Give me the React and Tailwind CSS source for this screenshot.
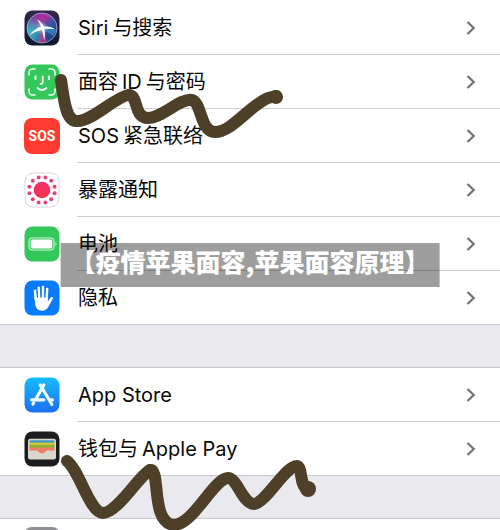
import React from 'react';

const SiriIcon = () => (
  <svg viewBox="0 0 36 36" className="size-9 shrink-0" aria-hidden="true">
    <defs>
      <linearGradient id="siriBg" x1="0" y1="0" x2="0" y2="1">
        <stop offset="0" stopColor="#33264f" />
        <stop offset="1" stopColor="#0d1830" />
      </linearGradient>
      <linearGradient id="siriTop" x1="0" y1="0" x2="1" y2="1">
        <stop offset="0" stopColor="#5a3a9c" />
        <stop offset=".35" stopColor="#b0309a" />
        <stop offset=".6" stopColor="#2f55a0" />
        <stop offset="1" stopColor="#16306f" />
      </linearGradient>
      <radialGradient id="siriTeal" cx=".1" cy=".62" r=".55">
        <stop offset="0" stopColor="#27c3c6" />
        <stop offset="1" stopColor="#27c3c6" stopOpacity="0" />
      </radialGradient>
      <radialGradient id="siriGlow">
        <stop offset="0" stopColor="#fff" />
        <stop offset=".4" stopColor="#bfe9f6" stopOpacity=".6" />
        <stop offset="1" stopColor="#bfe9f6" stopOpacity="0" />
      </radialGradient>
    </defs>
    <rect x=".5" y=".5" width="35" height="35" rx="8" fill="url(#siriBg)" />
    <circle cx="18" cy="18" r="15" fill="url(#siriTop)" />
    <circle cx="18" cy="18" r="15" fill="url(#siriTeal)" />
    <path d="M18 18 14 32Q19 34 23 31Z" fill="#d0388f" opacity=".7" />
    <path d="M18 18Q27 17 32 21L29 26Z" fill="#3d9bd0" opacity=".6" />
    <circle cx="18" cy="18" r="15" fill="none" stroke="#b8bfdd" strokeWidth=".9" opacity=".8" />
    <circle cx="18" cy="18" r="7" fill="url(#siriGlow)" opacity=".6" />
    <path d="M5.5 25Q11 18.5 17 16.6Q15 12 13 9.5Q18.5 12.5 19.8 16.2Q26 15.8 32 19.5Q26 18.2 20.6 19Q21.6 25 20.3 30.5Q19.4 24.5 17.8 20Q12 21 5.5 25Z" fill="#f5fcff" />
  </svg>
);

const FaceIdIcon = () => (
  <svg viewBox="0 0 36 36" className="size-9 shrink-0" aria-hidden="true">
    <rect x=".5" y=".5" width="35" height="35" rx="8" fill="#34c759" />
    <g fill="none" stroke="#e9ffee" strokeWidth="1.6" strokeLinecap="round">
      <path d="M5 11V9Q5 5 9 5H11M25 5H27Q31 5 31 9V11M31 25V27Q31 31 27 31H25M11 31H9Q5 31 5 27V25" />
      <path d="M11.5 12.5V15M25 12.5V15" strokeWidth="2.2" />
      <path d="M18.7 12.5V18Q18.7 20 16.5 20M13.5 24Q18 28 22.5 24" strokeWidth="1.8" />
    </g>
  </svg>
);

const SosIcon = () => (
  <span
    aria-hidden="true"
    className="flex size-9 shrink-0 items-center justify-center rounded-lg bg-[#ff3b30] font-['Liberation_Sans_Narrow','Roboto',sans-serif] text-sm font-bold text-white"
  >
    SOS
  </span>
);

const ExposureIcon = () => (
  <svg viewBox="0 0 36 36" className="size-9 shrink-0" aria-hidden="true">
    <defs>
      <linearGradient id="exposure" x1="0" y1="0" x2="0" y2="1">
        <stop offset="0" stopColor="#f52f6c" />
        <stop offset="1" stopColor="#f9304d" />
      </linearGradient>
    </defs>
    <rect x="1" y="1" width="34" height="34" rx="8" fill="#fff" stroke="#d8d8dc" />
    <circle cx="18" cy="18" r="8.3" fill="url(#exposure)" />
    <g fill="#e64278">
      {Array.from({ length: 12 }, (_, i) => {
        const angle = ((i * 30 + 15) * Math.PI) / 180;
        return <circle key={i} cx={18 + 13 * Math.cos(angle)} cy={18 + 13 * Math.sin(angle)} r="2" />;
      })}
    </g>
  </svg>
);

const BatteryIcon = () => (
  <svg viewBox="0 0 36 36" className="size-9 shrink-0" aria-hidden="true">
    <rect x=".5" y=".5" width="35" height="35" rx="8" fill="#34c759" />
    <rect x="5" y="12" width="25" height="12" rx="3.4" fill="none" stroke="#d6f6de" strokeWidth="1.1" />
    <rect x="6.7" y="13.6" width="21.6" height="8.8" rx="2" fill="#fff" />
    <path d="M31.5 16Q33.5 18 31.5 20Z" fill="#d6f6de" />
  </svg>
);

const HandIcon = () => (
  <svg viewBox="0 0 36 36" className="size-9 shrink-0" aria-hidden="true">
    <rect x=".5" y=".5" width="35" height="35" rx="8" fill="#087bfb" />
    <g stroke="#fff" strokeLinecap="round" strokeWidth="2.5" fill="none">
      <path d="M11.7 19 11 10.7M15.3 18 14.7 7.8M19 18V7M22.6 18 23.2 9" />
    </g>
    <path d="M10.4 17H23.9V21.5L26 18.3Q27.2 16.5 28.8 17.2Q29.4 17.7 28.6 19.2L24.7 26.3Q22.5 30.7 17.7 30.7Q12.4 30.7 11.3 25Z" fill="#fff" />
    <path d="M13.5 11V18M17 9.5V18M20.8 10V18" stroke="#087bfb" strokeWidth=".8" />
  </svg>
);

const AppStoreIcon = () => (
  <svg viewBox="0 0 36 36" className="size-9 shrink-0" aria-hidden="true">
    <defs>
      <linearGradient id="store" x1="0" y1="0" x2="0" y2="1">
        <stop offset="0" stopColor="#17bdfb" />
        <stop offset="1" stopColor="#1b6ff0" />
      </linearGradient>
    </defs>
    <rect x=".5" y=".5" width="35" height="35" rx="8" fill="url(#store)" />
    <g stroke="#f4fbff" strokeWidth="3.2" strokeLinecap="round" fill="none">
      <path d="M19.8 8 11.6 22.5M16.2 8 27.8 27.3M9.6 26 9 27.1" />
      <path d="M7.6 22.8H19.8M25.5 22.8H28.5" />
    </g>
  </svg>
);

const WalletIcon = () => (
  <svg viewBox="0 0 36 36" className="size-9 shrink-0" aria-hidden="true">
    <rect x=".5" y=".5" width="35" height="35" rx="8" fill="#1b1d1e" />
    <rect x="4" y="7.8" width="28" height="20.6" rx="2.2" fill="#dcd7cb" />
    <path d="M5.5 10.8Q5.5 9.2 7 9.2H29Q30.5 9.2 30.5 10.8V12H5.5Z" fill="#3c9bc4" />
    <path d="M5.5 11.6H30.5V14.4H5.5Z" fill="#d9c63a" />
    <path d="M5.5 13.8H30.5V17H5.5Z" fill="#8ab532" />
    <path d="M5.5 16.6H30.5V19.4H24Q22.5 19.4 21.4 20.8Q18 24.4 14.6 20.8Q13.5 19.4 12 19.4H5.5Z" fill="#ef7d67" />
  </svg>
);

const Chevron = () => (
  <svg viewBox="0 0 10 16" className="h-4 w-2.5 shrink-0" aria-hidden="true">
    <path d="M1.5 2 7.7 8 1.5 14" fill="none" stroke="#757575" strokeWidth="2.3" />
  </svg>
);

function Row({ icon, last = false, children }) {
  return (
    <li>
      <a href="#" className={`flex items-stretch gap-[17px] pl-6 ${last ? 'h-[53px]' : 'h-[54px]'}`}>
        <span className="flex items-center">{icon}</span>
        <span
          className={`flex flex-1 items-center justify-between pr-6 pl-px ${
            last ? '' : 'border-b border-[#cfcfd1]'
          }`}
        >
          <span>{children}</span>
          <Chevron />
        </span>
      </a>
    </li>
  );
}

export default function App() {
  return (
    <main className="relative h-screen overflow-hidden bg-[#e9e9ee] font-['Inter','Noto_Sans_CJK_SC',sans-serif] text-xl text-[#080808]">
      <ul className="border-b border-[#c9c9cc] bg-white pt-px">
        <Row icon={<SiriIcon />}><span className="mr-1">Siri</span>与搜索</Row>
        <Row icon={<FaceIdIcon />}>面容<span className="mx-1">ID</span>与密码</Row>
        <Row icon={<SosIcon />}><span className="mr-1">SOS</span>紧急联络</Row>
        <Row icon={<ExposureIcon />}>暴露通知</Row>
        <Row icon={<BatteryIcon />}>电池</Row>
        <Row icon={<HandIcon />} last>隐私</Row>
      </ul>

      <ul className="mt-[42px] border-y border-[#c9c9cc] bg-white">
        <Row icon={<AppStoreIcon />}>App Store</Row>
        <Row icon={<WalletIcon />} last>钱包与<span className="ml-1">Apple Pay</span></Row>
      </ul>

      <div className="mt-[42px] border-t border-[#c9c9cc] bg-white py-2 pl-6">
        <div className="size-9 rounded-lg bg-[#8e8e93]" />
      </div>

      <svg
        viewBox="0 0 500 530"
        className="pointer-events-none absolute top-0 left-0 h-[530px] w-[500px]"
        fill="none"
        stroke="#4e4028"
        strokeWidth="12"
        strokeLinecap="round"
        strokeLinejoin="round"
        aria-hidden="true"
      >
        <path d="M61 80C64 98 65 121 77 121C91 122 114 98 128 95C139 94 133 118 148 118C162 118 180 98 192 100C202 103 200 132 215 132C232 132 249 106 268 98L276 96" />
        <path d="M67 461C80 471 89 512 103 513C117 513 138 477 150 470C161 468 150 523 174 525C194 524 213 479 228 478C237 478 243 504 254 504C266 503 285 466 297 466C303 468 299 484 307 489" />
        <g fill="#4e4028" stroke="none">
          <circle cx="276" cy="97" r="7" />
          <circle cx="308" cy="489" r="8" />
        </g>
      </svg>

      <div className="absolute top-[243px] left-1/2 h-11 -translate-x-1/2 bg-black/38 px-2.5 text-[25px] leading-9 font-black whitespace-nowrap text-white">
        <h1 className="font-['Noto_Sans_CJK_SC',sans-serif]">【疫情苹果面容,苹果面容原理】</h1>
      </div>
    </main>
  );
}
